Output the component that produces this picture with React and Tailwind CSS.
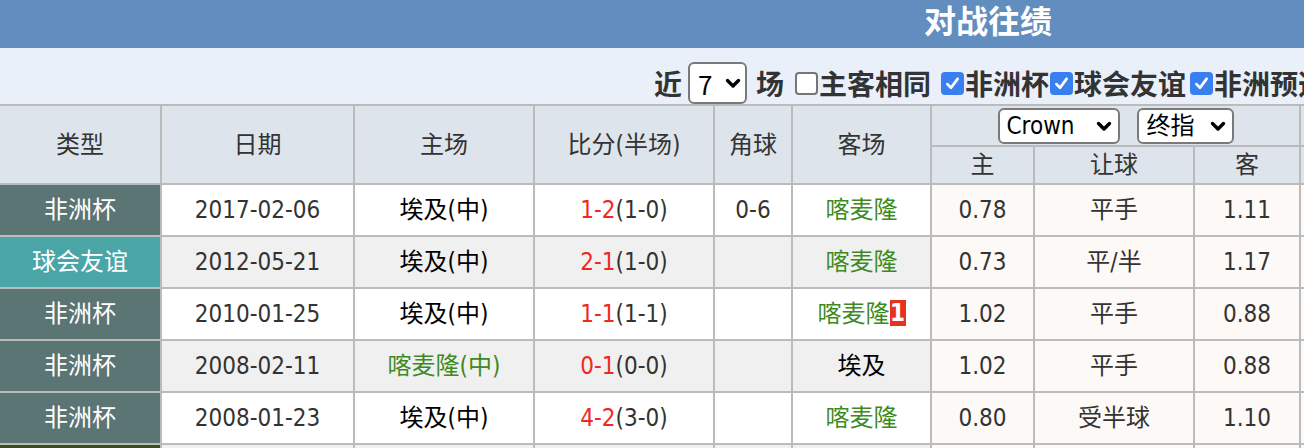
import React from "react";

const FONT = { fontFamily: '"DejaVu Sans Condensed", "Liberation Sans", "Noto Sans CJK SC", sans-serif' };
const CJK = { fontFamily: '"Noto Sans CJK SC", "Liberation Sans", sans-serif' };

function Chevron() {
  return (
    <svg width="16" height="12" viewBox="0 0 16 12" className="shrink-0">
      <path d="M2.5 3.5 L8 9 L13.5 3.5" fill="none" stroke="#000" strokeWidth="3.4" strokeLinecap="round" strokeLinejoin="round" />
    </svg>
  );
}

function FakeSelect({ label, className }) {
  return (
    <div className={"flex items-center justify-between bg-white border-2 border-[#7a7a7a] rounded-[6px] text-black " + className}>
      <span>{label}</span>
      <Chevron />
    </div>
  );
}

function Checkbox({ checked }) {
  if (checked) {
    return (
      <span className="flex w-[23px] h-[23px] rounded-[4px] bg-[#3a7ff0] items-center justify-center shrink-0">
        <svg width="17" height="17" viewBox="0 0 16 16">
          <path d="M3.2 8.6 L6.6 12 L12.8 3.6" fill="none" stroke="#fff" strokeWidth="2.6" strokeLinecap="round" strokeLinejoin="round" />
        </svg>
      </span>
    );
  }
  return <span className="block w-[23px] h-[23px] rounded-[4px] bg-white border-2 border-[#767676] shrink-0" />;
}

const rows = [
  { type: "非洲杯", tc: "bg-[#5b7474]", date: "2017-02-06", home: "埃及(中)", hg: false, s: "1-2", h: "(1-0)", corner: "0-6", away: "喀麦隆", ag: true, badge: null, o1: "0.78", hc: "平手", o2: "1.11" },
  { type: "球会友谊", tc: "bg-[#4aa6a6]", date: "2012-05-21", home: "埃及(中)", hg: false, s: "2-1", h: "(1-0)", corner: "", away: "喀麦隆", ag: true, badge: null, o1: "0.73", hc: "平/半", o2: "1.17" },
  { type: "非洲杯", tc: "bg-[#5b7474]", date: "2010-01-25", home: "埃及(中)", hg: false, s: "1-1", h: "(1-1)", corner: "", away: "喀麦隆", ag: true, badge: "1", o1: "1.02", hc: "平手", o2: "0.88" },
  { type: "非洲杯", tc: "bg-[#5b7474]", date: "2008-02-11", home: "喀麦隆(中)", hg: true, s: "0-1", h: "(0-0)", corner: "", away: "埃及", ag: false, badge: null, o1: "1.02", hc: "平手", o2: "0.88" },
  { type: "非洲杯", tc: "bg-[#5b7474]", date: "2008-01-23", home: "埃及(中)", hg: false, s: "4-2", h: "(3-0)", corner: "", away: "喀麦隆", ag: true, badge: null, o1: "0.80", hc: "受半球", o2: "1.10" },
  { type: "世界杯", tc: "bg-[#3b4f19]", date: "2005-09-04", home: "埃及", hg: false, s: "0-0", h: "(0-0)", corner: "", away: "喀麦隆", ag: true, badge: null, o1: "0.90", hc: "平手", o2: "0.95" },
];

const widths = [160, 191, 178, 178, 76, 137, 101, 158, 104, 101, 158, 104, 160];

export default function App() {
  return (
    <div className="w-[1304px] h-[448px] overflow-hidden bg-white" style={FONT}>
      <div className="w-[1976px]">
        <div className="h-[48px] bg-[#628dbf] flex justify-center">
          <span className="text-white font-bold text-[32px] leading-[38px]" style={CJK}>对战往绩</span>
        </div>
        <div className="h-[56px] bg-[#e9f0fa] flex items-start justify-center pt-[14px] pl-[32px] text-[28px] font-bold text-[#333]" style={CJK}>
          <div className="flex items-center h-[42px] whitespace-nowrap">
            <span>近</span>
            <FakeSelect label="7" className="ml-[6px] w-[59px] h-[42px] pl-[8px] pr-[4px] font-normal text-[26px]" />
            <span className="ml-[9px]">场</span>
            <span className="ml-[11px]"><Checkbox checked={false} /></span>
            <span className="ml-[1px]">主客相同</span>
            <span className="ml-[10px]"><Checkbox checked /></span>
            <span className="ml-[1px]">非洲杯</span>
            <span className="ml-[1px]"><Checkbox checked /></span>
            <span className="ml-[1px]">球会友谊</span>
            <span className="ml-[4px]"><Checkbox checked /></span>
            <span className="ml-[1px]">非洲预选赛</span>
          </div>
        </div>
        <table className="-ml-[2px] table-fixed border-separate border-spacing-[2px] bg-[#bbbbbb] text-[24px] leading-[28px] text-[#333]" style={{ width: 1980 }}>
          <colgroup>
            {widths.map((w, i) => (
              <col key={i} style={{ width: w }} />
            ))}
            <col />
          </colgroup>
          <thead>
            <tr>
              {["类型", "日期", "主场", "比分(半场)", "角球", "客场"].map((t) => (
                <th key={t} rowSpan={2} className="bg-[#dee4ec] font-normal text-center align-middle">{t}</th>
              ))}
              <th colSpan={3} className="bg-[#dee4ec] font-normal h-[39px] p-0">
                <div className="flex items-center justify-center gap-[17px]">
                  <FakeSelect label="Crown" className="w-[122px] h-[36px] pl-[7px] pr-[6px] text-[24px]" />
                  <FakeSelect label="终指" className="w-[97px] h-[36px] pl-[8px] pr-[6px] text-[24px]" />
                </div>
              </th>
              <th colSpan={3} className="bg-[#dee4ec] font-normal">大小球</th>
              <th rowSpan={2} className="bg-[#dee4ec] font-normal">结果</th>
              <th rowSpan={2} className="bg-[#dee4ec] font-normal"></th>
            </tr>
            <tr>
              {["主", "让球", "客", "大", "盘口", "小"].map((t) => (
                <th key={t} className="bg-[#dee4ec] font-normal h-[36px] p-0">{t}</th>
              ))}
            </tr>
          </thead>
          <tbody>
            {rows.map((r, i) => {
              const bg = i % 2 === 1 ? "bg-[#f0f0f0]" : "bg-white";
              const od = "bg-[#fdf9f6]";
              return (
                <tr key={i}>
                  <td className={r.tc + " text-white text-center h-[50px] p-0"}>{r.type}</td>
                  <td className={bg + " text-center p-0"}>{r.date}</td>
                  <td className={bg + " text-center p-0 " + (r.hg ? "text-[#3c8a22]" : "text-black")}>{r.home}</td>
                  <td className={bg + " text-center p-0"}>
                    <span className="text-[#ee2a1e]">{r.s}</span>
                    <span>{r.h}</span>
                  </td>
                  <td className={bg + " text-center p-0"}>{r.corner}</td>
                  <td className={bg + " text-center p-0 " + (r.ag ? "text-[#3c8a22]" : "text-black")}>
                    {r.away}
                    {r.badge && (
                      <span className="inline-block bg-[#e8311f] text-white font-bold text-[24px] h-[26px] leading-[26px] w-[16px] text-center align-[1px]">{r.badge}</span>
                    )}
                  </td>
                  <td className={od + " text-center p-0"}>{r.o1}</td>
                  <td className={od + " text-center p-0"}>{r.hc}</td>
                  <td className={od + " text-center p-0"}>{r.o2}</td>
                  <td className={od + " text-center p-0"}>0.90</td>
                  <td className={od + " text-center p-0"}>2.5</td>
                  <td className={od + " text-center p-0"}>0.90</td>
                  <td className={bg + " text-center p-0"}>负</td>
                  <td className={bg + " p-0"}></td>
                </tr>
              );
            })}
          </tbody>
        </table>
      </div>
    </div>
  );
}
